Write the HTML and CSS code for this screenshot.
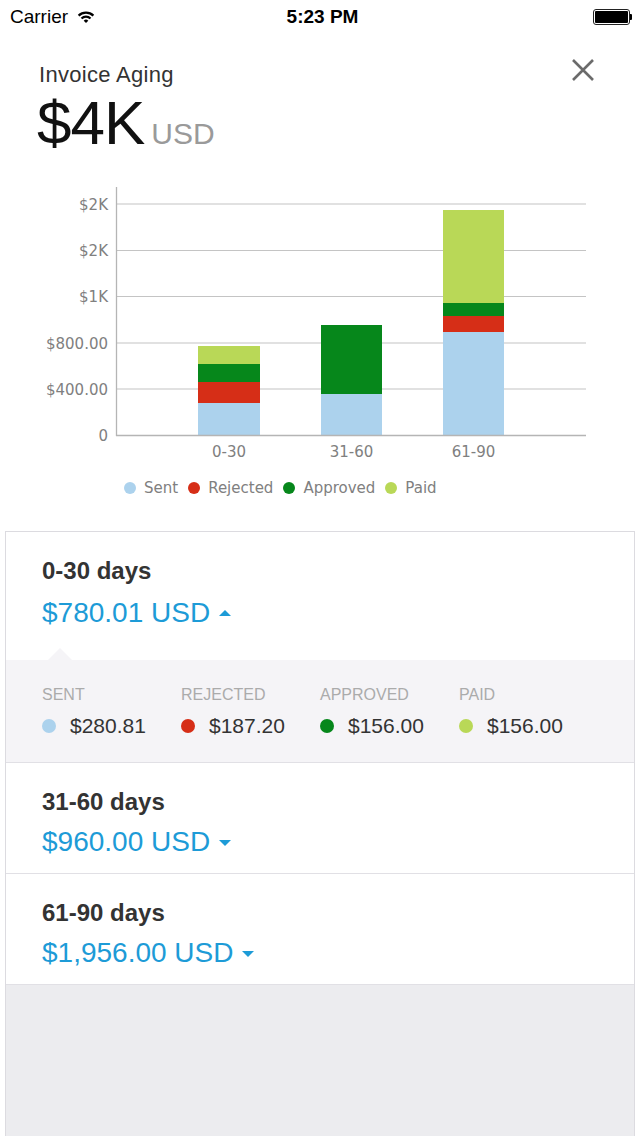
FILE: index.html
```html
<!DOCTYPE html>
<html>
<head>
<meta charset="utf-8">
<link rel="stylesheet" href="styles.css">
</head>
<body>
<div class="status">
  <div class="status-left">
    <span class="carrier">Carrier</span>
    <svg class="wifi" width="18" height="14" viewBox="0 0 18 14">
      <path d="M1.6 6.6 A10.6 10.6 0 0 1 16.4 6.6" fill="none" stroke="#000" stroke-width="2.2"/>
      <path d="M4.5 9.5 A6.4 6.4 0 0 1 13.5 9.5" fill="none" stroke="#000" stroke-width="2.2"/>
      <path d="M9 14 L6.7 11.7 A3.2 3.2 0 0 1 11.3 11.7 Z" fill="#000"/>
    </svg>
  </div>
  <div class="time">5:23 PM</div>
  <div class="status-right">
    <div class="battery"><div class="battery-fill"></div></div>
    <div class="battery-nub"></div>
  </div>
</div>

<div class="header">
  <div class="header-text">
    <div class="title">Invoice Aging</div>
    <div class="total"><span class="total-num">$4K</span><span class="total-cur">USD</span></div>
  </div>
  <svg class="close" width="24" height="24" viewBox="0 0 24 24">
    <path d="M2 2 L22 22 M22 2 L2 22" stroke="#6b6b6b" stroke-width="2.6" fill="none"/>
  </svg>
</div>

<div class="chart">
  <svg class="chart-svg" width="639" height="290" viewBox="0 0 639 290">
    <g stroke="#c4c4c4" stroke-width="1.2">
      <line x1="116" y1="24" x2="586" y2="24"/>
      <line x1="116" y1="70.5" x2="586" y2="70.5"/>
      <line x1="116" y1="116.5" x2="586" y2="116.5"/>
      <line x1="116" y1="163" x2="586" y2="163"/>
      <line x1="116" y1="209" x2="586" y2="209"/>
    </g>
    <g>
      <rect x="198" y="166" width="62" height="18" fill="#b9d857"/>
      <rect x="198" y="184" width="62" height="18" fill="#06871b"/>
      <rect x="198" y="202" width="62" height="21" fill="#d62e17"/>
      <rect x="198" y="223" width="62" height="32" fill="#acd2ed"/>

      <rect x="321" y="145" width="61" height="69" fill="#06871b"/>
      <rect x="321" y="214" width="61" height="41" fill="#acd2ed"/>

      <rect x="443" y="30" width="61" height="93" fill="#b9d857"/>
      <rect x="443" y="123" width="61" height="13" fill="#06871b"/>
      <rect x="443" y="136" width="61" height="16" fill="#d62e17"/>
      <rect x="443" y="152" width="61" height="103" fill="#acd2ed"/>
    </g>
    <line x1="116" y1="255.5" x2="586" y2="255.5" stroke="#b5b5b5" stroke-width="1.3"/>
    <line x1="116.5" y1="7" x2="116.5" y2="256" stroke="#b5b5b5" stroke-width="1.3"/>
    <g class="axis-text" text-anchor="end">
      <text x="108" y="29.5">$2K</text>
      <text x="108" y="76">$2K</text>
      <text x="108" y="122">$1K</text>
      <text x="108" y="168.5">$800.00</text>
      <text x="108" y="214.5">$400.00</text>
      <text x="108" y="260.5">0</text>
    </g>
    <g class="axis-text" text-anchor="middle">
      <text x="229" y="276.5">0-30</text>
      <text x="351.5" y="276.5">31-60</text>
      <text x="473.5" y="276.5">61-90</text>
    </g>
  </svg>
  <div class="legend">
    <div class="legend-item"><span class="dot sent"></span>Sent</div>
    <div class="legend-item"><span class="dot rejected"></span>Rejected</div>
    <div class="legend-item"><span class="dot approved"></span>Approved</div>
    <div class="legend-item"><span class="dot paid"></span>Paid</div>
  </div>
</div>

<div class="list">
  <div class="row">
    <div class="row-head expanded">
      <div class="row-title">0-30 days</div>
      <div class="row-amount">$780.01 USD<span class="caret up"></span></div>
    </div>
    <div class="panel">
      <div class="panel-col">
        <div class="panel-label">SENT</div>
        <div class="panel-value"><span class="pdot sent"></span>$280.81</div>
      </div>
      <div class="panel-col">
        <div class="panel-label">REJECTED</div>
        <div class="panel-value"><span class="pdot rejected"></span>$187.20</div>
      </div>
      <div class="panel-col">
        <div class="panel-label">APPROVED</div>
        <div class="panel-value"><span class="pdot approved"></span>$156.00</div>
      </div>
      <div class="panel-col">
        <div class="panel-label">PAID</div>
        <div class="panel-value"><span class="pdot paid"></span>$156.00</div>
      </div>
    </div>
  </div>
  <div class="row">
    <div class="row-head">
      <div class="row-title">31-60 days</div>
      <div class="row-amount">$960.00 USD<span class="caret down"></span></div>
    </div>
  </div>
  <div class="row">
    <div class="row-head">
      <div class="row-title">61-90 days</div>
      <div class="row-amount">$1,956.00 USD<span class="caret down"></span></div>
    </div>
  </div>
</div>
</body>
</html>
```

FILE: styles.css
```css
* { box-sizing: border-box; }

html, body {
  margin: 0;
  padding: 0;
}

body {
  width: 639px;
  height: 1136px;
  overflow: hidden;
  background: #ffffff;
  font-family: "Liberation Sans", Arial, sans-serif;
  color: #222;
  display: flex;
  flex-direction: column;
}

/* status bar */
.status {
  height: 40px;
  flex: none;
  display: grid;
  grid-template-columns: 1fr auto 1fr;
  align-items: center;
  padding: 0 7px 6px 10px;
}

.status-left {
  display: flex;
  align-items: center;
  gap: 9px;
}

.carrier {
  font-size: 19px;
  color: #000;
}

.wifi {
  display: block;
  margin-top: -3px;
}

.time {
  font-size: 19px;
  font-weight: 700;
  color: #000;
  padding-left: 3px;
}

.status-right {
  display: flex;
  justify-content: flex-end;
  align-items: center;
}

.battery {
  width: 37px;
  height: 16px;
  border: 1px solid #222;
  border-radius: 3px;
  padding: 1px;
}

.battery-fill {
  width: 100%;
  height: 100%;
  background: #000;
  border-radius: 1px;
}

.battery-nub {
  width: 2px;
  height: 6px;
  background: #000;
  border-radius: 0 1px 1px 0;
}

/* header */
.header {
  height: 140px;
  flex: none;
  display: flex;
  justify-content: space-between;
  align-items: flex-start;
  padding: 23px 44px 0 39px;
}

.title {
  font-size: 22px;
  line-height: 24px;
  color: #333;
  letter-spacing: 0.3px;
}

.total {
  margin-top: 8px;
  height: 56px;
  line-height: 56px;
  white-space: nowrap;
}

.total-num {
  font-size: 62px;
  color: #111;
  letter-spacing: -1px;
  margin-left: -2px;
}

.total-cur {
  font-size: 30px;
  color: #9a9a9a;
  margin-left: 7px;
}

.close {
  display: block;
  margin-top: -5px;
}

/* chart */
.chart {
  flex: none;
  height: 351px;
}

.chart-svg {
  display: block;
}

.axis-text text {
  font-family: "DejaVu Sans", sans-serif;
  font-size: 15px;
  fill: #808080;
}

.legend {
  height: 36px;
  display: flex;
  align-items: center;
  gap: 10px;
  padding-left: 124px;
  font-family: "DejaVu Sans", sans-serif;
  font-size: 15px;
  color: #808080;
}

.legend-item {
  display: flex;
  align-items: center;
}

.dot {
  width: 12px;
  height: 12px;
  border-radius: 50%;
  margin-right: 8px;
}

.sent { background: #acd2ed; }
.rejected { background: #d62e17; }
.approved { background: #06871b; }
.paid { background: #b9d857; }

/* list */
.list {
  flex: 1;
  margin: 0 4px 0 5px;
  border: 1px solid #dcdbe0;
  border-bottom: none;
  background: #ececef;
}

.row {
  background: #fff;
  border-bottom: 1px solid #e1e0e5;
}

.row-head {
  padding: 25px 0 14px 36px;
}

.row-head.expanded {
  padding-bottom: 30px;
}

.row-head.expanded .row-amount {
  margin-top: 11px;
}

.row-title {
  font-size: 24px;
  line-height: 28px;
  font-weight: 700;
  color: #333;
}

.row-amount {
  margin-top: 9px;
  font-size: 28px;
  line-height: 34px;
  color: #1d9bd7;
  display: flex;
  align-items: center;
}

.caret {
  width: 0;
  height: 0;
  margin-left: 9px;
  border-left: 6px solid transparent;
  border-right: 6px solid transparent;
}

.caret.up {
  border-bottom: 6px solid #1d9bd7;
  margin-top: -1px;
}

.caret.down {
  border-top: 6px solid #1d9bd7;
  margin-top: 1px;
}

.panel {
  position: relative;
  background: #f5f4f7;
  padding: 26px 0 24px 36px;
  display: grid;
  grid-template-columns: repeat(4, 139px);
}

.panel::before {
  content: "";
  position: absolute;
  left: 42px;
  top: -12px;
  width: 0;
  height: 0;
  border-left: 12px solid transparent;
  border-right: 12px solid transparent;
  border-bottom: 12px solid #f5f4f7;
}

.panel-label {
  font-size: 16px;
  line-height: 18px;
  color: #ababab;
}

.panel-value {
  margin-top: 10px;
  font-size: 21px;
  line-height: 24px;
  color: #333;
  display: flex;
  align-items: center;
}

.pdot {
  width: 14px;
  height: 14px;
  border-radius: 50%;
  margin-right: 14px;
  flex: none;
}
```
